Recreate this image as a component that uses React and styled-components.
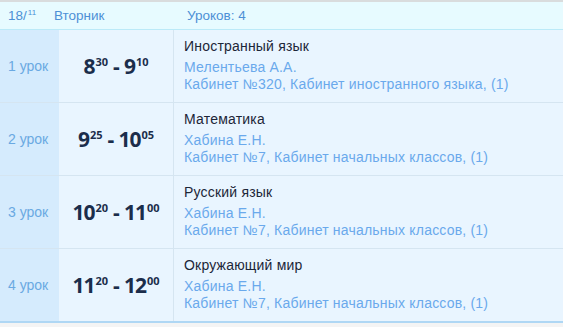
import React from "react";
import styled, { createGlobalStyle } from "styled-components";

const GlobalStyle = createGlobalStyle`
  body {
    margin: 0;
    background: #f4f4f4;
    font-family: "Liberation Sans", Arial, sans-serif;
  }
`;

const Wrapper = styled.div`
  width: 563px;
  border-top: 2px solid #d9dcdd;
`;

const Header = styled.div`
  display: grid;
  grid-template-columns: 46px 133px 1fr;
  align-items: center;
  height: 27px;
  padding-left: 8px;
  background: #e7fbff;
  border-bottom: 1px solid #bbeaf8;
  font-size: 13.5px;
  color: #4d90d6;
`;

const DateSup = styled.sup`
  font-size: 8px;
  vertical-align: 5px;
  margin-left: 1px;
`;

const Table = styled.div`
  border-bottom: 2px solid #afd7f4;
`;

const Row = styled.div`
  display: grid;
  grid-template-columns: 59px 115px 1fr;
  height: 72px;
  border-bottom: ${(p) => (p.$last ? "none" : "1px solid #d5e5f1")};
  background: #e9f5ff;
`;

const Num = styled.div`
  display: flex;
  align-items: center;
  padding-left: 8px;
  background: #d5ebfd;
  font-size: 14px;
  color: #6aa9e2;
`;

const Time = styled.div`
  display: flex;
  align-items: center;
  justify-content: center;
  border-right: 1px solid #d5e5f1;
  font-family: "Open Sans", "Liberation Sans", sans-serif;
  font-weight: 700;
  font-size: 21px;
  color: #1b2d4b;
  letter-spacing: -1px;
  white-space: pre;
`;

const Sup = styled.span`
  display: inline-block;
  font-size: 11px;
  line-height: 11px;
  transform: translateY(-5px);
  margin-left: 1px;
  letter-spacing: 0;
`;

const Dash = styled.span`
  margin: 0 5px;
`;

const Info = styled.div`
  display: flex;
  flex-direction: column;
  padding: 8px 0 0 10px;
  font-size: 14px;
  line-height: 17px;
  letter-spacing: 0.2px;
`;

const Subject = styled.div`
  color: #1c2638;
  margin-bottom: 4px;
`;

const Detail = styled.div`
  color: #6aa9ec;
`;

const lessons = [
  {
    n: 1,
    from: ["8", "30"],
    to: ["9", "10"],
    subject: "Иностранный язык",
    teacher: "Мелентьева А.А.",
    room: "Кабинет №320, Кабинет иностранного языка, (1)",
  },
  {
    n: 2,
    from: ["9", "25"],
    to: ["10", "05"],
    subject: "Математика",
    teacher: "Хабина Е.Н.",
    room: "Кабинет №7, Кабинет начальных классов, (1)",
  },
  {
    n: 3,
    from: ["10", "20"],
    to: ["11", "00"],
    subject: "Русский язык",
    teacher: "Хабина Е.Н.",
    room: "Кабинет №7, Кабинет начальных классов, (1)",
  },
  {
    n: 4,
    from: ["11", "20"],
    to: ["12", "00"],
    subject: "Окружающий мир",
    teacher: "Хабина Е.Н.",
    room: "Кабинет №7, Кабинет начальных классов, (1)",
  },
];

const App = () => {
  return (
    <Wrapper>
      <GlobalStyle />
      <Header>
        <span>
          18/<DateSup>11</DateSup>
        </span>
        <span>Вторник</span>
        <span>Уроков: 4</span>
      </Header>
      <Table>
        {lessons.map((l, i) => (
          <Row key={l.n} $last={i === lessons.length - 1}>
            <Num>{l.n} урок</Num>
            <Time>
              {l.from[0]}
              <Sup>{l.from[1]}</Sup>
              <Dash>-</Dash>
              {l.to[0]}
              <Sup>{l.to[1]}</Sup>
            </Time>
            <Info>
              <Subject>{l.subject}</Subject>
              <Detail>{l.teacher}</Detail>
              <Detail>{l.room}</Detail>
            </Info>
          </Row>
        ))}
      </Table>
    </Wrapper>
  );
};

export default App;
